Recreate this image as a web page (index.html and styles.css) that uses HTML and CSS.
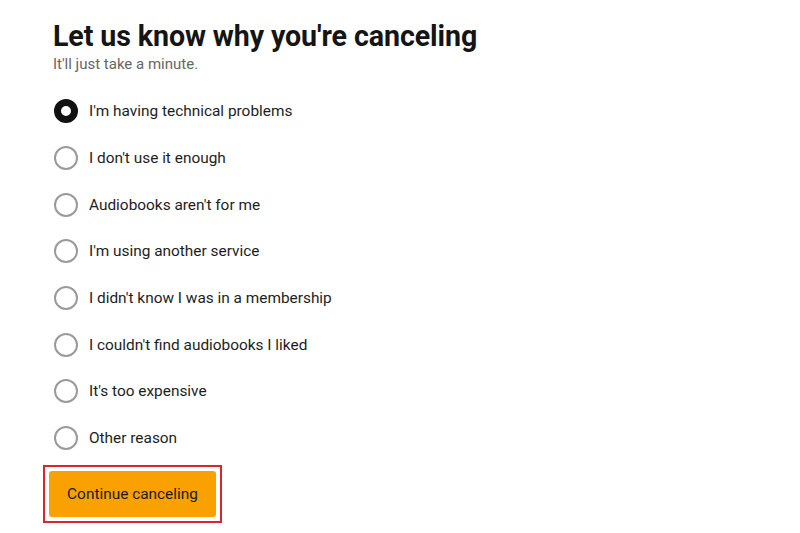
FILE: index.html
```html
<!DOCTYPE html>
<html lang="en">
<head>
  <meta charset="UTF-8">
  <title>Cancel membership</title>
  <meta name="viewport" content="width=device-width, initial-scale=1.0">
  <link rel="stylesheet" href="styles.css">
</head>
<body>
  <div class="container">
    <h2>Let us know why you're canceling</h2>
    <p class="sub">It'll just take a minute.</p>
    <form id="cancel-form">
      <div class="radio-group">
        <label><input type="radio" name="reason" value="technical" checked><span class="dot"></span>I'm having technical problems</label>
        <label><input type="radio" name="reason" value="enough"><span class="dot"></span>I don't use it enough</label>
        <label><input type="radio" name="reason" value="notforme"><span class="dot"></span>Audiobooks aren't for me</label>
        <label><input type="radio" name="reason" value="service"><span class="dot"></span>I'm using another service</label>
        <label><input type="radio" name="reason" value="membership"><span class="dot"></span>I didn't know I was in a membership</label>
        <label><input type="radio" name="reason" value="liked"><span class="dot"></span>I couldn't find audiobooks I liked</label>
        <label><input type="radio" name="reason" value="expensive"><span class="dot"></span>It's too expensive</label>
        <label><input type="radio" name="reason" value="other"><span class="dot"></span>Other reason</label>
      </div>
      <div class="highlight">
        <button type="submit">Continue canceling</button>
      </div>
    </form>
  </div>
</body>
</html>
```

FILE: styles.css
```css
body {
  margin: 0;
  background: #fff;
  font-family: "Roboto", "Liberation Sans", sans-serif;
  color: #1a1a1a;
}
.container {
  padding: 18px 0 0 53px;
}
h2 {
  margin: 0;
  font-size: 28.6px;
  font-weight: 700;
  line-height: 36px;
  letter-spacing: -0.1px;
  color: #151515;
}
.sub {
  margin: 0;
  font-size: 15px;
  line-height: 20px;
  color: #666;
}
.radio-group {
  display: flex;
  flex-direction: column;
  margin-top: 14px;
}
.radio-group label {
  display: flex;
  align-items: center;
  height: 46.7px;
  font-size: 15.4px;
  color: #1d1d1d;
}
.radio-group input[type="radio"] {
  display: none;
}
.dot {
  width: 20px;
  height: 20px;
  border: 2px solid #9a9a9a;
  border-radius: 50%;
  margin: 0 11px 0 1px;
  flex-shrink: 0;
}
.radio-group input:checked + .dot {
  border: 7px solid #111;
  width: 10px;
  height: 10px;
  background: #fff;
}
.highlight {
  display: inline-block;
  margin: 3px 0 0 -10px;
  padding: 4px;
  border: 2px solid #d9262b;
}
button {
  display: block;
  width: 167px;
  height: 46px;
  background: #f9a100;
  border: none;
  border-radius: 3px;
  font-family: inherit;
  font-size: 15.4px;
  color: #1a1a1a;
  cursor: pointer;
}
```
